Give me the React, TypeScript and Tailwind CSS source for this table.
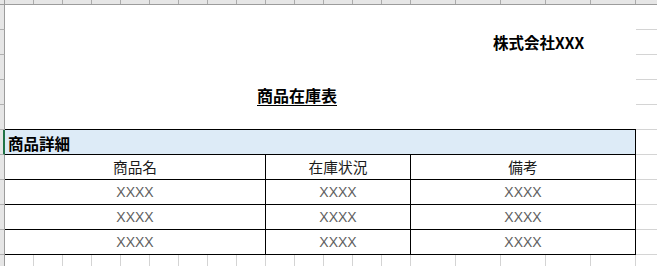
const cols = [29, 29, 29, 29, 29, 29, 29, 29, 29, 29, 29, 29, 29, 29, 45, 45, 45, 45, 45];
const items = ["XXXX", "XXXX", "XXXX"];

function SideRow({ active }: { active?: boolean }) {
  return (
    <div
      className={
        active
          ? "h-[25px] shrink-0 border-b border-r-2 border-b-[#b0b0b0] border-r-[#217346]"
          : "h-[25px] shrink-0 border-b border-r border-[#b0b0b0] border-r-[#9c9c9c]"
      }
    />
  );
}

function BlankRow({ last, children }: { last?: boolean; children?: React.ReactNode }) {
  return (
    <div className="flex h-[25px] shrink-0">
      <div className={last ? "w-[631px] shrink-0 border-b border-black flex items-center" : "w-[631px] shrink-0 flex items-center"}>
        {children}
      </div>
      <div className="flex-1 border-b border-[#d4d4d4]" />
    </div>
  );
}

function TableRow({ cells, head }: { cells: string[]; head?: boolean }) {
  const text = head
    ? "text-[14.7px] text-[#1a1a1a] font-['Noto_Sans_CJK_JP',sans-serif]"
    : "text-[14px] text-[#5f5f5f] font-['Liberation_Sans',sans-serif]";
  return (
    <div className="flex h-[25px] shrink-0">
      <div className="w-[631px] shrink-0 flex border-b border-r border-black">
        <div className={`w-[261px] shrink-0 flex items-center justify-center border-r border-black leading-none ${text}`}>
          {cells[0]}
        </div>
        <div className={`w-[145px] shrink-0 flex items-center justify-center border-r border-black leading-none ${text}`}>
          {cells[1]}
        </div>
        <div className={`flex-1 flex items-center justify-center leading-none ${text}`}>{cells[2]}</div>
      </div>
      <div className="flex-1 border-b border-[#d4d4d4]" />
    </div>
  );
}

export default function App() {
  return (
    <div className="w-[657px] h-[266px] overflow-hidden bg-white flex flex-col font-['Noto_Sans_CJK_JP',sans-serif] text-black">
      {/* column headers */}
      <div className="flex h-[5px] shrink-0 bg-[#e6e6e6] border-b border-[#9c9c9c]">
        <div className="w-[5px] shrink-0 border-r border-[#9c9c9c]" />
        {cols.map((w, i) => (
          <div key={i} className={`${w === 29 ? "w-[29px]" : "w-[45px]"} shrink-0 border-r border-[#ababab]`} />
        ))}
        <div className="flex-1" />
      </div>

      <div className="flex flex-1 min-h-0">
        {/* row headers */}
        <div className="w-[5px] shrink-0 flex flex-col bg-[#e6e6e6]">
          {Array.from({ length: 11 }).map((_, i) => (
            <SideRow key={i} active={i === 5} />
          ))}
        </div>

        {/* sheet */}
        <div className="flex-1 flex flex-col">
          <BlankRow />
          <BlankRow>
            <span className="pl-[488px] text-[15.5px] font-bold leading-none">株式会社XXX</span>
          </BlankRow>
          <BlankRow />
          <BlankRow>
            <span className="pl-[252px] pt-[4px] text-[16px] font-bold leading-none underline underline-offset-[3px]">
              商品在庫表
            </span>
          </BlankRow>
          <BlankRow last />

          <div className="flex h-[25px] shrink-0">
            <div className="w-[631px] shrink-0 flex items-center pt-[3px] pl-[3px] bg-[#ddebf7] border-b border-r border-black">
              <span className="text-[15.5px] font-bold leading-none">商品詳細</span>
            </div>
            <div className="flex-1 border-b border-[#d4d4d4]" />
          </div>

          <TableRow head cells={["商品名", "在庫状況", "備考"]} />
          {items.map((x, i) => (
            <TableRow key={i} cells={[x, x, x]} />
          ))}

          <div className="flex h-[25px] shrink-0">
            {cols.map((w, i) => (
              <div key={i} className={`${w === 29 ? "w-[29px]" : "w-[45px]"} shrink-0 border-r border-[#d4d4d4]`} />
            ))}
            <div className="flex-1" />
          </div>
        </div>
      </div>
    </div>
  );
}
